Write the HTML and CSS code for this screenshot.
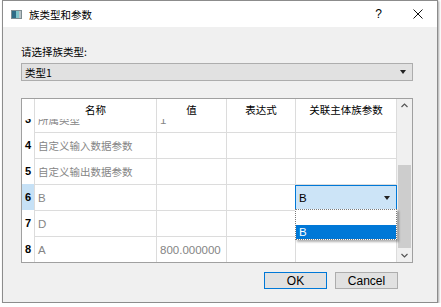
FILE: index.html
```html
<!DOCTYPE html>
<html lang="zh-CN">
<head>
  <meta charset="UTF-8" />
  <title>族类型和参数</title>
  <link rel="stylesheet" href="styles.css">
</head>
<body>

  <div class="window">
    <div class="titlebar">
      <svg class="app-icon" width="11" height="9" viewBox="0 0 11 9">
        <rect x="0.5" y="0.5" width="10" height="8" fill="#e8f2f4" stroke="#7d8b90"/>
        <rect x="1" y="1" width="4" height="7" fill="#2e6b86"/>
        <rect x="5" y="1" width="3" height="7" fill="#7fc3c9"/>
        <rect x="8" y="1" width="2" height="7" fill="#b9c3c6"/>
      </svg>
      <span class="title zh">族类型和参数</span>
      <span class="help">?</span>
      <svg class="close" width="10" height="10" viewBox="0 0 10 10">
        <path d="M0.5 0.5 L9.5 9.5 M9.5 0.5 L0.5 9.5" stroke="#111" stroke-width="1" fill="none"/>
      </svg>
    </div>

    <div class="content">
      <div class="field-label zh">请选择族类型:</div>
      <div class="combo">
        <span class="zh">类型1</span>
        <span class="arrow"></span>
      </div>

      <div class="table">
        <div class="grid-area">
          <div class="header-row">
            <div class="hcell"></div>
            <div class="hcell zh">名称</div>
            <div class="hcell zh">值</div>
            <div class="hcell zh">表达式</div>
            <div class="hcell zh">关联主体族参数</div>
          </div>

          <div class="viewport">
            <div class="rows">
              <div class="row">
                <div class="vh">3</div>
                <div class="cell zh">所属类型</div>
                <div class="cell">1</div>
                <div class="cell"></div>
                <div class="cell"></div>
              </div>
              <div class="row">
                <div class="vh">4</div>
                <div class="cell zh">自定义输入数据参数</div>
                <div class="cell"></div>
                <div class="cell"></div>
                <div class="cell"></div>
              </div>
              <div class="row">
                <div class="vh">5</div>
                <div class="cell zh">自定义输出数据参数</div>
                <div class="cell"></div>
                <div class="cell"></div>
                <div class="cell"></div>
              </div>
              <div class="row">
                <div class="vh current">6</div>
                <div class="cell">B</div>
                <div class="cell"></div>
                <div class="cell"></div>
                <div class="cell editing">
                  <div class="editor">
                    <span>B</span>
                    <span class="arrow"></span>
                  </div>
                </div>
              </div>
              <div class="row">
                <div class="vh">7</div>
                <div class="cell">D</div>
                <div class="cell"></div>
                <div class="cell"></div>
                <div class="cell"></div>
              </div>
              <div class="row">
                <div class="vh">8</div>
                <div class="cell">A</div>
                <div class="cell">800.000000</div>
                <div class="cell"></div>
                <div class="cell"></div>
              </div>
            </div>
          </div>

          <div class="popup">
            <div class="popup-item"></div>
            <div class="popup-item selected">B</div>
          </div>
        </div>

        <div class="vscroll">
          <svg class="chevron" width="7" height="5" viewBox="0 0 7 5">
            <path d="M0.5 4 L3.5 1 L6.5 4" stroke="#555" stroke-width="1.2" fill="none"/>
          </svg>
          <div class="track">
            <div class="thumb"></div>
          </div>
          <svg class="chevron" width="7" height="5" viewBox="0 0 7 5">
            <path d="M0.5 1 L3.5 4 L6.5 1" stroke="#555" stroke-width="1.2" fill="none"/>
          </svg>
        </div>
      </div>

      <div class="buttons">
        <button class="btn default">OK</button>
        <button class="btn">Cancel</button>
      </div>
    </div>
  </div>

</body>
</html>
```

FILE: styles.css
```css
* {
  box-sizing: border-box;
}
body {
  margin: 0;
  background: #fff;
  font-family: "Liberation Sans", "Noto Sans CJK SC", sans-serif;
  font-size: 11.5px;
  color: #000;
}
.zh {
  font-family: "Noto Sans CJK SC", sans-serif;
  font-size: 10.5px;
}
.window {
  margin-left: 2px;
  width: 436px;
  height: 303px;
  border: 1px solid #8c8c8c;
  background: #f0f0f0;
  box-shadow: 1px 1px 2px rgba(0, 0, 0, 0.35);
}
.titlebar {
  height: 26px;
  background: #fff;
  display: flex;
  align-items: center;
  padding: 0 14px 0 8px;
}
.app-icon {
  margin-right: 7px;
}
.help {
  margin-left: auto;
  margin-right: 31px;
  font-size: 12px;
}
.content {
  padding: 17px 24px 0 18px;
}
.field-label {
  height: 16px;
  line-height: 16px;
}
.combo {
  margin-top: 3px;
  height: 18px;
  border: 1px solid #adadad;
  background: #e1e1e1;
  display: flex;
  align-items: center;
  padding: 0 6px 0 3px;
}
.arrow {
  margin-left: auto;
  width: 0;
  height: 0;
  border-left: 3.5px solid transparent;
  border-right: 3.5px solid transparent;
  border-top: 4px solid #222;
}
.table {
  margin-top: 17px;
  height: 165px;
  border: 1px solid #a0a0a0;
  background: #fff;
  display: flex;
}
.grid-area {
  width: 375px;
  position: relative;
}
.header-row,
.row {
  display: grid;
  grid-template-columns: 13px 122px 70px 69px 101px;
}
.header-row {
  height: 20px;
  position: relative;
  z-index: 1;
  background: #fff;
}
.hcell {
  border-right: 1px solid #dcdcdc;
  display: flex;
  align-items: center;
  justify-content: center;
  color: #000;
}
.viewport {
  height: 143px;
  overflow: hidden;
}
.rows {
  margin-top: -13px;
}
.row {
  height: 26px;
}
.vh {
  border-right: 1px solid #dcdcdc;
  display: flex;
  align-items: center;
  justify-content: center;
  font-weight: bold;
  font-size: 11px;
}
.vh.current {
  background: #c6e1f6;
}
.cell {
  border-right: 1px solid #dcdcdc;
  border-top: 1px solid #dcdcdc;
  display: flex;
  align-items: center;
  padding-left: 3px;
  color: #858585;
  white-space: nowrap;
  overflow: hidden;
}
.cell.editing {
  padding: 0;
  overflow: visible;
}
.editor {
  margin: 0 -1px;
  width: calc(100% + 2px);
  height: 100%;
  border: 1px solid #0078d7;
  background: #cce4f7;
  display: flex;
  align-items: center;
  padding: 0 6px 0 3px;
  color: #000;
}
.popup {
  position: absolute;
  top: 110px;
  left: 273px;
  width: 102px;
  height: 31px;
  border: 1px dotted #7a7a7a;
  background: #fff;
  box-shadow: 2px 2px 2px rgba(0, 0, 0, 0.3);
  z-index: 2;
}
.popup-item {
  height: 15px;
  line-height: 14px;
  padding-left: 3px;
}
.popup-item.selected {
  height: 14px;
  background: #0078d7;
  color: #fff;
}
.vscroll {
  width: 15px;
  background: #f0f0f0;
  display: flex;
  flex-direction: column;
  align-items: center;
  padding: 4px 0;
}
.track {
  flex: 1;
  width: 100%;
  padding: 57px 1px 4px 1px;
}
.thumb {
  height: 83px;
  background: #cdcdcd;
}
.buttons {
  margin-top: 9px;
  display: flex;
  justify-content: flex-end;
  gap: 8px;
  padding-right: 15px;
}
.btn {
  width: 63px;
  height: 17px;
  padding: 0;
  border: 1px solid #adadad;
  background: #e1e1e1;
  font-family: "Liberation Sans", sans-serif;
  font-size: 12px;
  color: #000;
}
.btn.default {
  border-color: #0078d7;
}
```
